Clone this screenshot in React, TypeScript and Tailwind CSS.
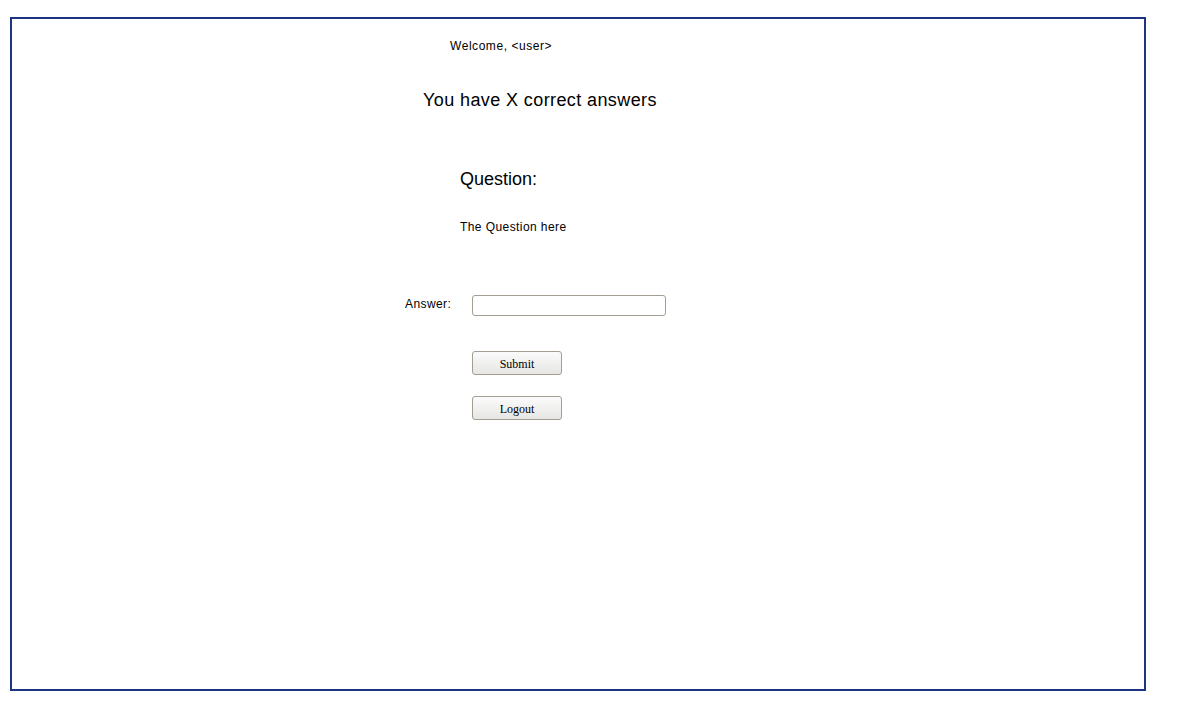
import React from "react";

export default function App() {
  return (
    <div className="w-[1177px] h-[721px] bg-white overflow-hidden" style={{ fontFamily: '"Liberation Sans", Arial, sans-serif' }}>
      <div className="ml-[10px] mt-[17px] w-[1136px] h-[674px] border-2 border-[#1c3580] flex flex-col items-start text-black">
        <div className="ml-[438px] mt-[20px] text-[12px] leading-[14px] tracking-[0.55px]">Welcome, &lt;user&gt;</div>
        <div className="ml-[411px] mt-[37px] text-[18px] leading-[20px] tracking-[0.4px]">You have X correct answers</div>
        <div className="ml-[448px] mt-[59px] text-[18px] leading-[20px]">Question:</div>
        <div className="ml-[448px] mt-[31px] text-[12px] leading-[14px] tracking-[0.42px]">The Question here</div>
        <div className="ml-[393px] mt-[61px] flex items-center">
          <span className="w-[67px] text-[12px] leading-[14px] tracking-[0.42px] -mt-[4px]">Answer:</span>
          <input
            type="text"
            className="w-[194px] h-[21px] border border-[#a39d92] rounded-[3px] bg-white outline-none"
          />
        </div>
        <button
          className="ml-[460px] mt-[35px] w-[90px] h-[24px] border border-[#a39d92] rounded-[3px] bg-gradient-to-b from-[#fbfbfb] to-[#e6e6e4] text-[12px] leading-[14px] text-black pt-[1px]"
          style={{ fontFamily: '"Liberation Serif", "Times New Roman", serif' }}
        >
          Submit
        </button>
        <button
          className="ml-[460px] mt-[21px] w-[90px] h-[24px] border border-[#a39d92] rounded-[3px] bg-gradient-to-b from-[#fbfbfb] to-[#e6e6e4] text-[12px] leading-[14px] text-black pt-[1px]"
          style={{ fontFamily: '"Liberation Serif", "Times New Roman", serif' }}
        >
          Logout
        </button>
      </div>
    </div>
  );
}
